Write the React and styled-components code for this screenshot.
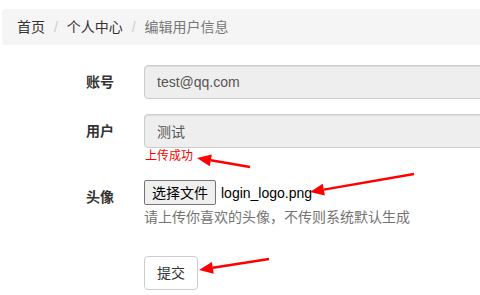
import React from "react";
import styled, { createGlobalStyle } from "styled-components";

const GlobalStyle = createGlobalStyle`
    html, body {
        margin: 0;
        padding: 0;
        background: #fff;
        overflow: hidden;
    }
    body {
        font-family: "Liberation Sans", "Noto Sans CJK SC", sans-serif;
        font-size: 14px;
        color: #333;
        line-height: 20px;
    }
`;

const Page = styled.div`
    position: relative;
    width: 480px;
    height: 295px;
    overflow: hidden;
    padding-top: 9px;
    box-sizing: border-box;
`;

const Breadcrumb = styled.ol`
    display: flex;
    list-style: none;
    margin: 0 0 20px 2px;
    padding: 8px 15px;
    width: 600px;
    background: #f5f5f5;
    border-radius: 4px;
    box-sizing: border-box;
    li + li::before {
        content: "/\\00a0";
        padding: 0 5px;
        margin-left: 4px;
        color: #ccc;
    }
`;

const Crumb = styled.li`
    color: ${(p) => (p.$active ? "#777" : "#333")};
`;

const Form = styled.form`
    width: 640px;
`;

const Group = styled.div`
    display: flex;
    margin-bottom: ${(p) => p.$mb ?? 15}px;
`;

const Label = styled.label`
    width: 114px;
    margin-right: 30px;
    padding-top: 7px;
    text-align: right;
    font-weight: bold;
    flex-shrink: 0;
`;

const Field = styled.div`
    flex: 1;
    display: flex;
    flex-direction: column;
    align-items: flex-start;
`;

const Input = styled.input`
    width: 100%;
    height: 34px;
    padding: 6px 12px;
    box-sizing: border-box;
    font: inherit;
    font-size: 14px;
    color: #555;
    background: #eee;
    border: 1px solid #ccc;
    border-radius: 4px;
    box-shadow: inset 0 1px 1px rgba(0, 0, 0, 0.075);
    opacity: 1;
    -webkit-text-fill-color: #555;
`;

const Success = styled.span`
    color: #f00;
    font-size: 12px;
    line-height: 17px;
    padding-left: 1px;
`;

const FileRow = styled.div`
    display: flex;
    align-items: center;
    height: 25px;
`;

const FileButton = styled.span`
    display: inline-flex;
    align-items: center;
    justify-content: center;
    width: 72px;
    height: 25px;
    box-sizing: border-box;
    background: #efefef;
    border: 1px solid #767676;
    border-radius: 2px;
    color: #000;
    font-size: 14px;
`;

const FileName = styled.span`
    margin-left: 5px;
    color: #000;
`;

const Help = styled.span`
    display: block;
    margin-top: 2px;
    color: #737373;
`;

const Submit = styled.button`
    height: 34px;
    padding: 6px 12px;
    font: inherit;
    font-size: 14px;
    color: #333;
    background: #fff;
    border: 1px solid #ccc;
    border-radius: 4px;
`;

const Annotations = styled.svg`
    position: absolute;
    left: 0;
    top: 0;
    pointer-events: none;
`;

const Arrow = ({ x1, y1, x2, y2 }) => {
    const a = Math.atan2(y2 - y1, x2 - x1);
    const len = 14;
    const w = 6;
    const bx = x2 - len * Math.cos(a);
    const by = y2 - len * Math.sin(a);
    const px = -Math.sin(a) * w;
    const py = Math.cos(a) * w;
    return (
        <g>
            <line x1={x1} y1={y1} x2={bx} y2={by} stroke="#f00" strokeWidth="2.5" />
            <polygon
                points={`${x2},${y2} ${bx + px},${by + py} ${bx - px},${by - py}`}
                fill="#f00"
            />
        </g>
    );
};

const App = () => {
    return (
        <Page>
            <GlobalStyle />
            <Breadcrumb>
                <Crumb>首页</Crumb>
                <Crumb>个人中心</Crumb>
                <Crumb $active>编辑用户信息</Crumb>
            </Breadcrumb>
            <Form>
                <Group>
                    <Label>账号</Label>
                    <Field>
                        <Input disabled value="test@qq.com" readOnly />
                    </Field>
                </Group>
                <Group>
                    <Label>用户</Label>
                    <Field>
                        <Input disabled value="测试" readOnly />
                        <Success>上传成功</Success>
                    </Field>
                </Group>
                <Group $mb={29}>
                    <Label>头像</Label>
                    <Field>
                        <FileRow>
                            <FileButton>选择文件</FileButton>
                            <FileName>login_logo.png</FileName>
                        </FileRow>
                        <Help>请上传你喜欢的头像，不传则系统默认生成</Help>
                    </Field>
                </Group>
                <Group>
                    <Label as="span" />
                    <Field>
                        <Submit type="button">提交</Submit>
                    </Field>
                </Group>
            </Form>
            <Annotations width="480" height="295">
                <Arrow x1={250} y1={167} x2={197} y2={158} />
                <Arrow x1={414} y1={174} x2={310} y2={192} />
                <Arrow x1={269} y1={259} x2={199} y2={270} />
            </Annotations>
        </Page>
    );
};

export default App;
